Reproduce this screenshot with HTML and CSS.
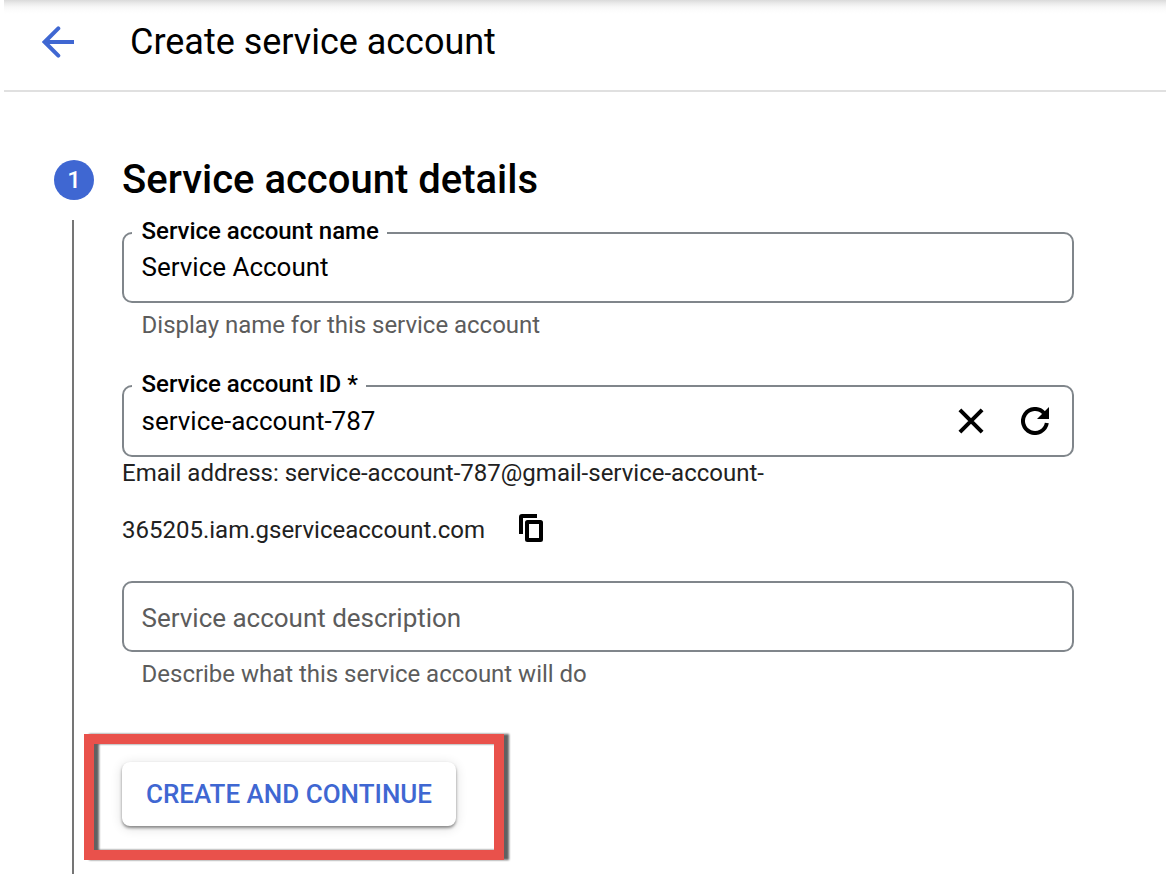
FILE: index.html
```html
<!DOCTYPE html>
<html lang="en">
<head>
<meta charset="utf-8">
<title>Create service account</title>
<link rel="stylesheet" href="styles.css">
</head>
<body>
<div class="page">
  <header class="topbar">
    <svg class="back" viewBox="0 0 32 32" fill="none" stroke="#3f67d2" stroke-width="4"><path d="M32 16H3"/><path d="M16.3 2.4L2.7 16L16.3 29.6" stroke-linecap="round" stroke-linejoin="miter"/></svg>
    <h1 class="title">Create service account</h1>
  </header>
  <main class="step">
    <div class="rail">
      <div class="badge">1</div>
      <div class="line"></div>
    </div>
    <section class="content">
      <h2 class="heading">Service account details</h2>
      <div class="field name">
        <label class="label">Service account name</label>
        <span class="value">Service Account</span>
      </div>
      <p class="hint">Display name for this service account</p>
      <div class="field id">
        <label class="label">Service account ID *</label>
        <span class="value">service-account-787</span>
        <svg class="clear" viewBox="0 0 26 26" stroke="#000" stroke-width="4"><path d="M1.9 1.9L24.1 24.1M24.1 1.9L1.9 24.1"/></svg>
        <svg class="refresh" viewBox="0 0 28 28"><path d="M25.83 16A12 12 0 1 1 22.8 5.8" fill="none" stroke="#000" stroke-width="4"/><path d="M28 0V12H16z"/></svg>
      </div>
      <div class="email">
        <p class="email-line">Email address: service-account-787@gmail-service-account-</p>
        <div class="email-row">
          <span class="email-line email-second">365205.iam.gserviceaccount.com</span>
          <svg class="copy" viewBox="0 0 24 28" fill="none" stroke="#000" stroke-width="4"><path d="M2 20V3Q2 2 3 2H18"/><rect x="8" y="8" width="14" height="18" rx=".5"/></svg>
        </div>
      </div>
      <div class="field desc"><span class="value placeholder">Service account description</span></div>
      <p class="hint">Describe what this service account will do</p>
      <div class="action">
        <button class="button">CREATE AND CONTINUE</button>
        <div class="callout"></div>
      </div>
    </section>
  </main>
</div>
</body>
</html>
```
FILE: styles.css
```css
* { box-sizing: border-box; }
body { margin: 0; background: #fff; font-family: Roboto, "Liberation Sans", sans-serif; color: #000; }
h1, h2, p { margin: 0; font-weight: 400; white-space: nowrap; }
svg { display: block; flex: none; }
.page { height: 876px; padding-left: 4px; overflow: hidden; }
.topbar {
  height: 92px; padding: 0 0 7px 38px; display: flex; align-items: center; gap: 56px;
  border-bottom: 2px solid #e0e0e0;
  background: linear-gradient(#dadada 0, #e9e9e9 3px, #f7f7f7 7px, #fdfdfd 11px, #fff 14px);
}
.back { width: 32px; height: 32px; }
.title { font-size: 36px; line-height: 44px; padding-top: 1px; letter-spacing: -.02px; }
.step { display: flex; gap: 28px; padding: 68px 0 2px 50px; height: 784px; }
.rail { width: 40px; display: flex; flex-direction: column; align-items: center; gap: 20px; }
.badge { width: 40px; height: 40px; border-radius: 50%; background: #3f67d2; color: #fff; font-size: 24px; font-weight: 500; line-height: 40px; text-align: center; }
.line { width: 2px; flex: 1; background: #757575; margin-right: 2px; }
.content { width: 952px; }
.heading { font-size: 40px; font-weight: 500; line-height: 40px; }
.field { position: relative; height: 71px; border: 2px solid #80868b; border-radius: 10px; padding: 0 23px 0 17.6px; display: flex; align-items: center; }
.name { margin-top: 32px; padding-bottom: 2px; }
.label { position: absolute; left: 8px; top: -17px; padding: 0 8px 0 9.6px; background: #fff; font-size: 24px; font-weight: 500; line-height: 28px; letter-spacing: -.03px; white-space: nowrap; }
.value { flex: 1; font-size: 26px; line-height: 30px; letter-spacing: -.02px; white-space: nowrap; }
.hint { padding-left: 19.6px; margin-top: 8px; font-size: 24px; line-height: 28px; letter-spacing: -.02px; color: #5c5c5c; }
.id { margin-top: 46px; height: 72px; }
.clear { width: 26px; height: 26px; margin-right: 37px; }
.refresh { width: 28px; height: 28px; }
.email { height: 124px; padding-top: 2px; color: #212121; }
.email-line { font-size: 24px; line-height: 28px; white-space: nowrap; }
.email-row { display: flex; align-items: flex-start; gap: 34px; margin-top: 27px; }
.email-second { padding-top: 2px; }
.copy { width: 24px; height: 28px; }
.desc { padding-top: 2px; }
.placeholder { color: #5c5c5c; }
.action { position: relative; margin-top: 74px; }
.button { display: block; width: 334px; height: 64px; padding: 0; border: 0; border-radius: 8px; background: #fff; color: #3f67d2; font: 500 26px/64px Roboto, sans-serif; white-space: nowrap; box-shadow: 0 2px 3px rgba(0,0,0,.42), 0 2px 12px rgba(0,0,0,.14); }
.callout { position: absolute; left: -38px; top: -28px; width: 420px; height: 126px; border: 10px solid #e9514b; filter: drop-shadow(5.5px 0 1.3px rgba(0,0,0,.62)); }
```
